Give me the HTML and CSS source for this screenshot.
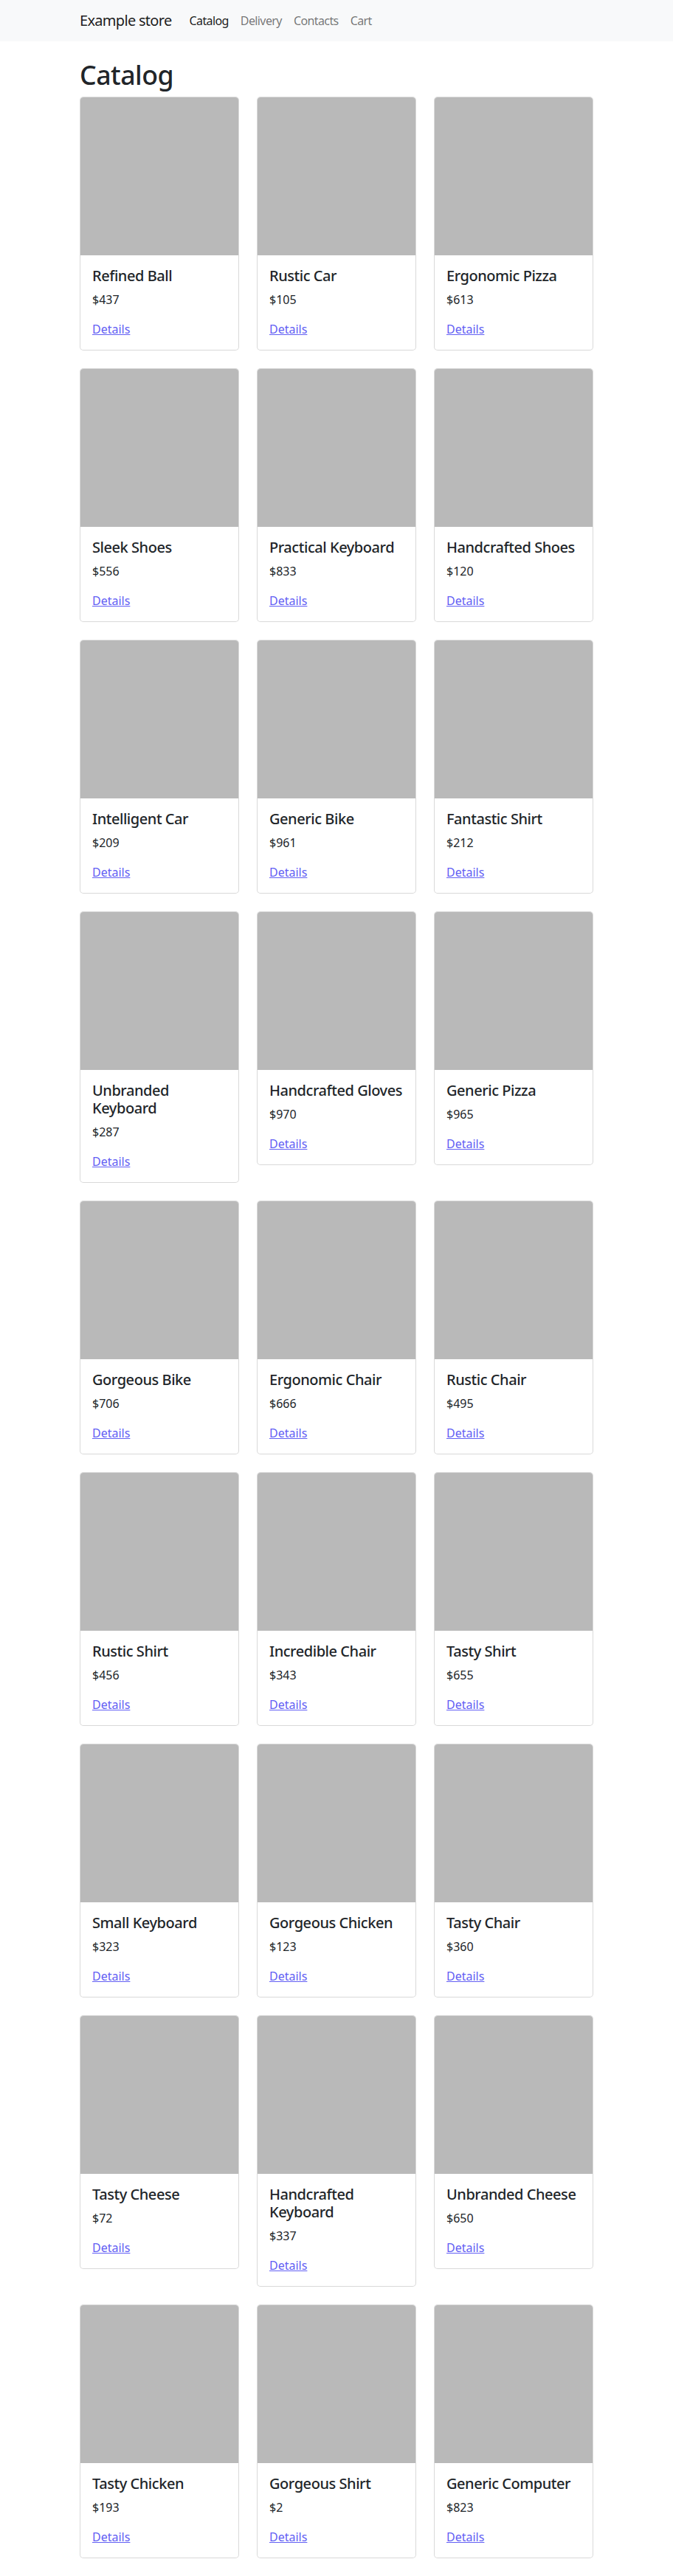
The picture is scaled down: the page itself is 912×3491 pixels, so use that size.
FILE: index.html
```html
<!DOCTYPE html>
<html lang="en">
<head>
<meta charset="utf-8">
<title>Example store</title>
<link rel="stylesheet" href="styles.css">
</head>
<body>
<nav class="navbar">
  <div class="container nav-inner">
    <a class="brand" href="#">Example store</a>
    <ul class="nav-links">
      <li><a class="nav-link active" href="#">Catalog</a></li>
      <li><a class="nav-link" href="#">Delivery</a></li>
      <li><a class="nav-link" href="#">Contacts</a></li>
      <li><a class="nav-link" href="#">Cart</a></li>
    </ul>
  </div>
</nav>
<main class="container main">
  <h1 class="page-title">Catalog</h1>
  <div class="grid">
    <div class="card"><div class="card-img"></div><div class="card-body"><h5 class="card-title">Refined Ball</h5><p class="card-text">$437</p><a class="card-link" href="#">Details</a></div></div>
    <div class="card"><div class="card-img"></div><div class="card-body"><h5 class="card-title">Rustic Car</h5><p class="card-text">$105</p><a class="card-link" href="#">Details</a></div></div>
    <div class="card"><div class="card-img"></div><div class="card-body"><h5 class="card-title">Ergonomic Pizza</h5><p class="card-text">$613</p><a class="card-link" href="#">Details</a></div></div>
    <div class="card"><div class="card-img"></div><div class="card-body"><h5 class="card-title">Sleek Shoes</h5><p class="card-text">$556</p><a class="card-link" href="#">Details</a></div></div>
    <div class="card"><div class="card-img"></div><div class="card-body"><h5 class="card-title">Practical Keyboard</h5><p class="card-text">$833</p><a class="card-link" href="#">Details</a></div></div>
    <div class="card"><div class="card-img"></div><div class="card-body"><h5 class="card-title">Handcrafted Shoes</h5><p class="card-text">$120</p><a class="card-link" href="#">Details</a></div></div>
    <div class="card"><div class="card-img"></div><div class="card-body"><h5 class="card-title">Intelligent Car</h5><p class="card-text">$209</p><a class="card-link" href="#">Details</a></div></div>
    <div class="card"><div class="card-img"></div><div class="card-body"><h5 class="card-title">Generic Bike</h5><p class="card-text">$961</p><a class="card-link" href="#">Details</a></div></div>
    <div class="card"><div class="card-img"></div><div class="card-body"><h5 class="card-title">Fantastic Shirt</h5><p class="card-text">$212</p><a class="card-link" href="#">Details</a></div></div>
    <div class="card"><div class="card-img"></div><div class="card-body"><h5 class="card-title">Unbranded Keyboard</h5><p class="card-text">$287</p><a class="card-link" href="#">Details</a></div></div>
    <div class="card"><div class="card-img"></div><div class="card-body"><h5 class="card-title">Handcrafted Gloves</h5><p class="card-text">$970</p><a class="card-link" href="#">Details</a></div></div>
    <div class="card"><div class="card-img"></div><div class="card-body"><h5 class="card-title">Generic Pizza</h5><p class="card-text">$965</p><a class="card-link" href="#">Details</a></div></div>
    <div class="card"><div class="card-img"></div><div class="card-body"><h5 class="card-title">Gorgeous Bike</h5><p class="card-text">$706</p><a class="card-link" href="#">Details</a></div></div>
    <div class="card"><div class="card-img"></div><div class="card-body"><h5 class="card-title">Ergonomic Chair</h5><p class="card-text">$666</p><a class="card-link" href="#">Details</a></div></div>
    <div class="card"><div class="card-img"></div><div class="card-body"><h5 class="card-title">Rustic Chair</h5><p class="card-text">$495</p><a class="card-link" href="#">Details</a></div></div>
    <div class="card"><div class="card-img"></div><div class="card-body"><h5 class="card-title">Rustic Shirt</h5><p class="card-text">$456</p><a class="card-link" href="#">Details</a></div></div>
    <div class="card"><div class="card-img"></div><div class="card-body"><h5 class="card-title">Incredible Chair</h5><p class="card-text">$343</p><a class="card-link" href="#">Details</a></div></div>
    <div class="card"><div class="card-img"></div><div class="card-body"><h5 class="card-title">Tasty Shirt</h5><p class="card-text">$655</p><a class="card-link" href="#">Details</a></div></div>
    <div class="card"><div class="card-img"></div><div class="card-body"><h5 class="card-title">Small Keyboard</h5><p class="card-text">$323</p><a class="card-link" href="#">Details</a></div></div>
    <div class="card"><div class="card-img"></div><div class="card-body"><h5 class="card-title">Gorgeous Chicken</h5><p class="card-text">$123</p><a class="card-link" href="#">Details</a></div></div>
    <div class="card"><div class="card-img"></div><div class="card-body"><h5 class="card-title">Tasty Chair</h5><p class="card-text">$360</p><a class="card-link" href="#">Details</a></div></div>
    <div class="card"><div class="card-img"></div><div class="card-body"><h5 class="card-title">Tasty Cheese</h5><p class="card-text">$72</p><a class="card-link" href="#">Details</a></div></div>
    <div class="card"><div class="card-img"></div><div class="card-body"><h5 class="card-title">Handcrafted Keyboard</h5><p class="card-text">$337</p><a class="card-link" href="#">Details</a></div></div>
    <div class="card"><div class="card-img"></div><div class="card-body"><h5 class="card-title">Unbranded Cheese</h5><p class="card-text">$650</p><a class="card-link" href="#">Details</a></div></div>
    <div class="card"><div class="card-img"></div><div class="card-body"><h5 class="card-title">Tasty Chicken</h5><p class="card-text">$193</p><a class="card-link" href="#">Details</a></div></div>
    <div class="card"><div class="card-img"></div><div class="card-body"><h5 class="card-title">Gorgeous Shirt</h5><p class="card-text">$2</p><a class="card-link" href="#">Details</a></div></div>
    <div class="card"><div class="card-img"></div><div class="card-body"><h5 class="card-title">Generic Computer</h5><p class="card-text">$823</p><a class="card-link" href="#">Details</a></div></div>
  </div>
</main>
</body>
</html>
```
FILE: styles.css
```css
* { box-sizing: border-box; }

html, body {
  margin: 0;
  padding: 0;
}

body {
  font-family: "Noto Sans", "Open Sans", "Liberation Sans", sans-serif;
  font-size: 16px;
  line-height: 1.5;
  color: #212529;
  background: #fff;
}

.container {
  width: 696px;
  margin: 0 auto;
}

.navbar {
  background: #f8f9fa;
  height: 56px;
}

.nav-inner {
  display: flex;
  align-items: center;
  height: 56px;
}

.brand {
  font-size: 20px;
  line-height: 30px;
  letter-spacing: -0.7px;
  color: rgba(0, 0, 0, 0.9);
  text-decoration: none;
  margin-right: 16px;
}

.nav-links {
  display: flex;
  list-style: none;
  margin: 0;
  padding: 0;
}

.nav-link {
  display: block;
  padding: 8px;
  letter-spacing: -0.6px;
  color: rgba(0, 0, 0, 0.55);
  text-decoration: none;
}

.nav-link.active {
  color: rgba(0, 0, 0, 0.9);
}

.main {
  padding-top: 24px;
  padding-bottom: 24px;
}

.page-title {
  margin: 0 0 8px;
  font-size: 35.68px;
  font-weight: 500;
  line-height: 1.2;
  letter-spacing: -0.5px;
}

.grid {
  display: grid;
  grid-template-columns: repeat(3, 216px);
  column-gap: 24px;
  row-gap: 24px;
  align-items: start;
}

.card {
  border: 1px solid rgba(0, 0, 0, 0.15);
  border-radius: 5px;
  overflow: hidden;
  background: #fff;
}

.card-img {
  height: 214px;
  background: #b9b9b9;
}

.card-body {
  padding: 16px;
}

.card-title {
  margin: 0 0 8px;
  font-size: 20px;
  font-weight: 500;
  line-height: 1.2;
  letter-spacing: -0.45px;
}

.card-text {
  margin: 0 0 16px;
}

.card-link {
  color: #6360f4;
  text-decoration: underline;
}
```
